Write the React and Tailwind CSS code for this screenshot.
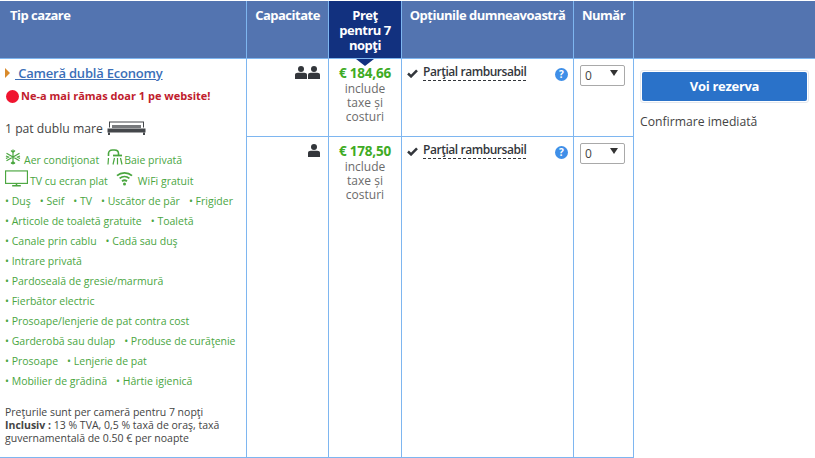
const font = { fontFamily: '"Open Sans", "Noto Sans", sans-serif' }

const facilities = [
  ['Duş', 'Seif', 'TV', 'Uscător de păr', 'Frigider'],
  ['Articole de toaletă gratuite', 'Toaletă'],
  ['Canale prin cablu', 'Cadă sau duş'],
  ['Intrare privată'],
  ['Pardoseală de gresie/marmură'],
  ['Fierbător electric'],
  ['Prosoape/lenjerie de pat contra cost'],
  ['Garderobă sau dulap', 'Produse de curăţenie'],
  ['Prosoape', 'Lenjerie de pat'],
  ['Mobilier de grădină', 'Hârtie igienică'],
]

function Person({ className }) {
  return (
    <svg viewBox="0 0 12 13" className={className} fill="#33363b">
      <circle cx="6" cy="3" r="3" />
      <path d="M0 13V9C0 7.5 1.2 6.8 2.6 6.8h6.8c1.4 0 2.6.7 2.6 2.2V13z" />
    </svg>
  )
}

function Snow() {
  return (
    <svg viewBox="0 0 16 16" className="w-[16px] h-[16px] -mt-[5px]" stroke="#4aa63f" strokeWidth="1.2" fill="none">
      <path d="M8 0.5v15M1.5 4.2l13 7.6M14.5 4.2l-13 7.6M6 1.5l2 2 2-2M6 14.5l2-2 2 2M1 7l2.5 1L1 9.5M15 7l-2.5 1 2.5 1.5" />
    </svg>
  )
}

function Shower() {
  return (
    <svg viewBox="0 0 17 16" className="w-[17px] h-[16px] -mt-[5px]" stroke="#4aa63f" fill="none" strokeWidth="1.2">
      <path d="M2.5 7V4.5C2.5 2.5 4 1 6.5 1h2c2.5 0 4 1.5 4 3.5V6" strokeWidth="1.6" />
      <path d="M7 6.5h9" strokeWidth="1.8" />
      <path d="M8.5 9L7 15.5M11.5 9v6.5M14.5 9L16 15.5M2.5 9L2 15.5" />
    </svg>
  )
}

function Monitor() {
  return (
    <svg viewBox="0 0 24 17" className="w-[23px] h-[17px] -mt-[4px]" fill="none" stroke="#4aa63f">
      <rect x="0.6" y="0.6" width="22.8" height="13" strokeWidth="1.2" />
      <path d="M7.5 16h9M12 14v2" strokeWidth="1.6" />
    </svg>
  )
}

function Wifi() {
  return (
    <svg viewBox="0 0 17 15" className="w-[17px] h-[15px] -mt-[5px]" fill="none" stroke="#4aa63f" strokeWidth="1.8">
      <path d="M1 4.6C5.2.9 11.8.9 16 4.6" />
      <path d="M3.6 7.4c2.9-2.4 6.9-2.4 9.8 0" />
      <path d="M6 10.2c1.5-1.1 3.5-1.1 5 0" />
      <circle cx="8.5" cy="13" r="1.5" fill="#4aa63f" stroke="none" />
    </svg>
  )
}

function Bed() {
  return (
    <svg viewBox="0 0 39 14" className="w-[39px] h-[14px] -mt-[1px]" fill="#44474b">
      <path d="M2 0.5h35v6h-1V1.5H3v5H2z" />
      <path d="M5 4h29v3H5z" fill="#77797c" />
      <path d="M0.5 7.5h38v4H0.5z" />
      <path d="M1 11.5h2V14H1zM36 11.5h2V14h-2z" />
    </svg>
  )
}

function Option() {
  return (
    <div className="flex items-start">
      <svg viewBox="0 0 12 10" className="w-[11px] h-[9px] mt-[5px] ml-[5px] mr-[5px]" fill="none" stroke="#33363b" strokeWidth="2.8">
        <path d="M1 5l3.4 3.2L11 1.5" />
      </svg>
      <span className="text-[12px] leading-[16px] font-semibold text-[#33363b] border-b border-dashed border-[#33363b] tracking-[-0.45px]">
        Parţial rambursabil
      </span>
      <span className="ml-auto mr-[5px] mt-[4px] w-[13px] h-[13px] rounded-full bg-[#3f8fe8] text-white text-[10px] leading-[13px] font-bold text-center">
        ?
      </span>
    </div>
  )
}

function Qty() {
  return (
    <div className="ml-[6px] w-[45px] h-[21px] bg-white border border-[#a9a9a9] rounded-[2px] flex items-center justify-between pl-[4px] pr-[6px] text-[12px] text-[#444]">
      <span>0</span>
      <span className="w-0 h-0 border-x-[4px] border-x-transparent border-t-[6px] border-t-[#333] -mt-[5px]" />
    </div>
  )
}

function Price({ value }) {
  return (
    <div className="pt-[6px] text-center">
      <div className="text-[13.5px] leading-[17px] font-bold text-[#3eab24] tracking-[-0.2px]">€ {value}</div>
      <div className="text-[12px] leading-[14px] text-[#6b6b6b]">
        include
        <br />
        taxe și
        <br />
        costuri
      </div>
    </div>
  )
}

const th = 'p-0 align-top text-white font-bold text-[13px] leading-[15px] tracking-[-0.5px] border-r border-[#7eb6f0]'
const td = 'p-0 align-top border-r border-b border-[#7eb6f0]'

export default function App() {
  return (
    <div style={font} className="w-[815px] h-[458px] bg-white overflow-hidden pt-px">
      <table className="w-[815px] table-fixed border-separate border-spacing-0">
        <colgroup>
          <col className="w-[247px]" />
          <col className="w-[82px]" />
          <col className="w-[73px]" />
          <col className="w-[172px]" />
          <col className="w-[60px]" />
          <col />
        </colgroup>
        <thead>
          <tr className="h-[57px] bg-[#5374b0]">
            <th className={`${th} text-left pl-[10px] pt-[7px]`}>Tip cazare</th>
            <th className={`${th} pt-[7px]`}>Capacitate</th>
            <th className={`${th} bg-[#12317f] relative pt-[7px] text-center`}>
              Preţ
              <br />
              pentru 7
              <br />
              nopţi
              <span className="absolute left-1/2 -translate-x-1/2 top-full mt-px w-0 h-0 border-x-[9px] border-x-transparent border-t-[7px] border-t-[#12317f] z-10" />
            </th>
            <th className={`${th} pt-[7px] whitespace-nowrap`}>Opțiunile dumneavoastră</th>
            <th className={`${th} pt-[7px]`}>Număr</th>
            <th className="p-0" />
          </tr>
          <tr className="h-px">
            <th colSpan={6} className="p-0 h-px bg-[#7eb6f0]" />
          </tr>
        </thead>
        <tbody>
          <tr className="h-[78px]">
            <td rowSpan={2} className={`${td} pl-[5px] pt-[6px] h-[399px]`}>
              <div className="flex items-center text-[13px] leading-[16px] font-semibold text-[#3b6fb8] tracking-[-0.2px]">
                <span className="w-0 h-0 border-y-[5px] border-y-transparent border-l-[5px] border-l-[#d98a2b] mr-[4px]" />
                <span className="underline pl-[1px]">&nbsp;Cameră dublă Economy</span>
              </div>
              <div className="flex items-center mt-[8px] text-[11px] leading-[14px] font-bold text-[#c0202d]">
                <span className="w-[13px] h-[13px] rounded-full bg-[#f0142f] mr-[2px] ml-[1px]" />
                Ne-a mai rămas doar 1 pe website!
              </div>
              <div className="flex items-center mt-[18px] text-[12.2px] leading-[15px] text-[#444]">
                1 pat dublu mare
                <span className="ml-[4px]"><Bed /></span>
              </div>
              <div className="mt-[13px] text-[10.5px] text-[#4aa63f] leading-[13px]">
                <div className="flex items-center h-[21px]">
                  <Snow />
                  <span className="ml-[3px] mt-[1px]">Aer condiţionat</span>
                  <span className="ml-[7px] flex"><Shower /></span>
                  <span className="ml-[1px] mt-[1px]">Baie privată</span>
                </div>
                <div className="flex items-center h-[21px]">
                  <Monitor />
                  <span className="ml-[2px] mt-[1px]">TV cu ecran plat</span>
                  <span className="ml-[8px] flex"><Wifi /></span>
                  <span className="ml-[5px] mt-[1px]">WiFi gratuit</span>
                </div>
                {facilities.map((row, i) => (
                  <div key={i} className="flex h-[20px] items-center">
                    {row.map((f) => (
                      <span key={f} className="mr-[9px]">• {f}</span>
                    ))}
                  </div>
                ))}
              </div>
              <div className="mt-[15px] text-[10.5px] leading-[13px] text-[#444]">
                Preţurile sunt per cameră pentru 7 nopţi
                <br />
                <b>Inclusiv :</b> 13 % TVA, 0,5 % taxă de oraş, taxă
                <br />
                guvernamentală de 0.50 € per noapte
              </div>
            </td>
            <td className={td}>
              <div className="flex justify-end gap-[1px] pr-[8px] pt-[7px]">
                <Person className="w-[12px] h-[13px]" />
                <Person className="w-[12px] h-[13px]" />
              </div>
            </td>
            <td className={td}><Price value="184,66" /></td>
            <td className={`${td} pt-[5px]`}><Option /></td>
            <td className={`${td} pt-[6px]`}><Qty /></td>
            <td rowSpan={2} className="p-0 align-top">
              <div className="ml-[6px] mr-[6px] mt-[11px] border border-[#e4e8ee] rounded-[3px] p-px">
                <div className="h-[29px] bg-[#2a72c9] rounded-[2px] flex items-center justify-center text-white text-[13px] font-bold tracking-[-0.3px]">
                  Voi rezerva
                </div>
              </div>
              <div className="ml-[6px] mt-[11px] text-[12.2px] leading-[16px] text-[#444]">Confirmare imediată</div>
            </td>
          </tr>
          <tr>
            <td className={td}>
              <div className="flex justify-end pr-[8px] pt-[7px]">
                <Person className="w-[12px] h-[13px]" />
              </div>
            </td>
            <td className={td}><Price value="178,50" /></td>
            <td className={`${td} pt-[5px]`}><Option /></td>
            <td className={`${td} pt-[6px]`}><Qty /></td>
          </tr>
        </tbody>
      </table>
    </div>
  )
}
